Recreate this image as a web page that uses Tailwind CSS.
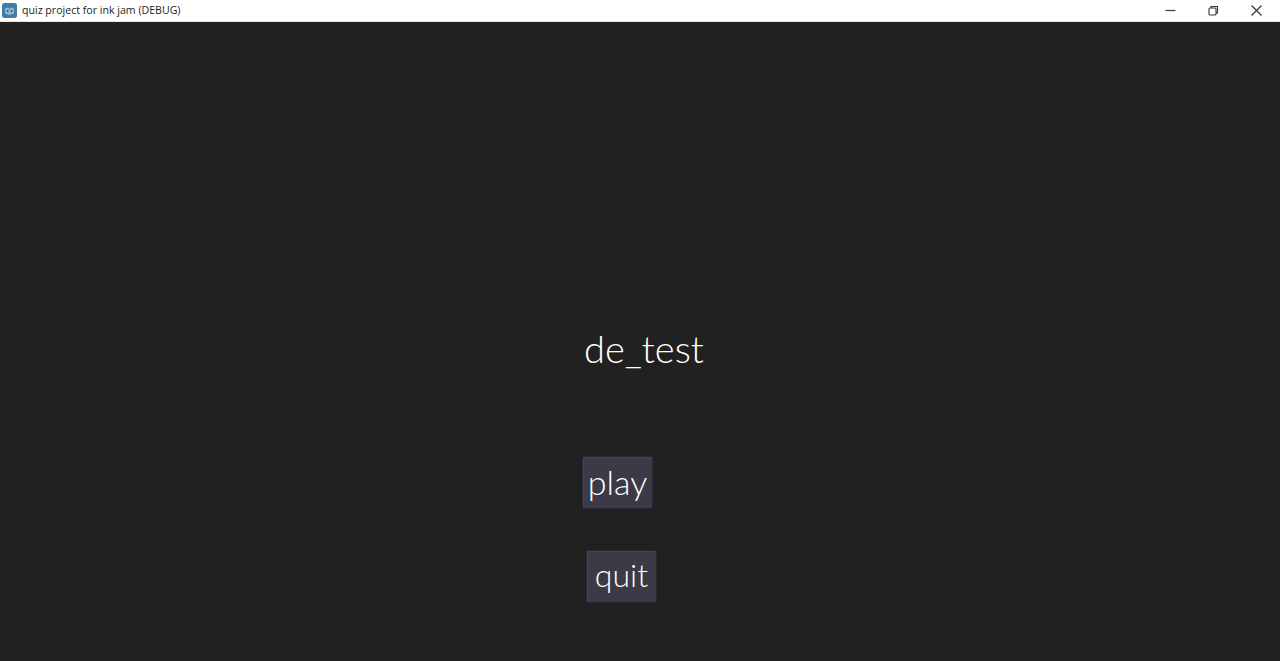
<!DOCTYPE html>
<html lang="en">
  <head>
    <meta charset="UTF-8" />
    <title>quiz project for ink jam (DEBUG)</title>
    <script src="https://cdn.jsdelivr.net/npm/@tailwindcss/browser@4"></script>
  </head>
  <body class="h-[661px] overflow-hidden bg-[#212121] font-['Lato',sans-serif]">
    <!-- Title bar -->
    <header class="flex h-[22px] items-center justify-between border-b border-[#e8e8e8] bg-white">
      <div class="flex items-center">
        <svg class="ml-[2px] h-[15px] w-[15px]" viewBox="0 0 15 15">
          <rect width="15" height="15" rx="2.5" fill="#3f7ca6" />
          <path d="M3 5.5 6 4.5 7.5 6 9 4.5 12 5.5V10.5L7.5 12 3 10.5Z" fill="#8db6d3" />
          <circle cx="5.5" cy="8" r="1" fill="#2c5a7c" />
          <circle cx="9.5" cy="8" r="1" fill="#2c5a7c" />
        </svg>
        <span class="ml-[5px] font-['Open_Sans',sans-serif] text-[10.6px] leading-none text-[#222]">quiz project for ink jam (DEBUG)</span>
      </div>
      <div class="mr-[18px] flex items-center gap-[32px]">
        <svg class="h-[11px] w-[11px]" viewBox="0 0 11 11"><path d="M0.5 5.5H10.5" stroke="#444" stroke-width="1.3" /></svg>
        <svg class="h-[11px] w-[11px]" viewBox="0 0 11 11" fill="none" stroke="#333" stroke-width="1.1"><rect x="1" y="3" width="7" height="7" rx="1" /><path d="M3 3V1.5H9.5V8H8" /></svg>
        <svg class="h-[11px] w-[11px]" viewBox="0 0 11 11"><path d="M0.5 0.5 10.5 10.5M10.5 0.5 0.5 10.5" stroke="#333" stroke-width="1.2" /></svg>
      </div>
    </header>

    <!-- Menu -->
    <main class="flex flex-col items-start pl-[582px] pt-[304px]">
      <h1 class="ml-[2px] h-[44px] text-[38px] leading-[44px] font-light text-white">de_test</h1>
      <button class="mt-[86px] flex h-[53px] w-[71px] items-center justify-center rounded-[2px] border border-[#2a2933] bg-[#3c3a47] pb-[2px] text-[34px] font-light text-white shadow-[inset_0_1px_0_#474552,inset_1px_0_0_#474552]">play</button>
      <button class="mt-[41px] ml-[4px] flex h-[53px] w-[71px] items-center justify-center rounded-[2px] border border-[#2a2933] bg-[#3c3a47] pb-[3px] text-[32px] font-light text-white shadow-[inset_0_1px_0_#474552,inset_1px_0_0_#474552]">quit</button>
    </main>
  </body>
</html>
